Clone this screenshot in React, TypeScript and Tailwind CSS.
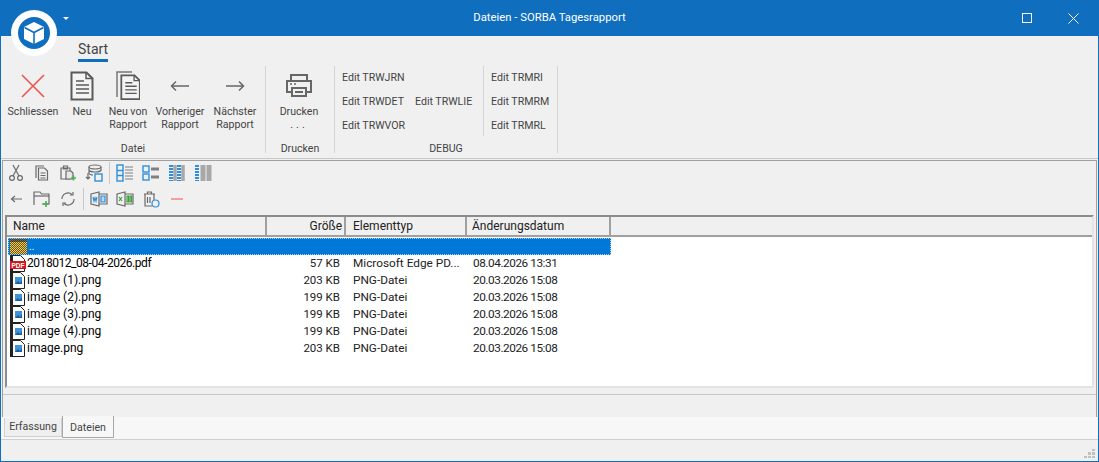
import { type ReactNode } from "react";

const rows = [
  { name: "2018012_08-04-2026.pdf", size: "57 KB", type: "Microsoft Edge PD...", date: "08.04.2026 13:31", pdf: true },
  { name: "image (1).png", size: "203 KB", type: "PNG-Datei", date: "20.03.2026 15:08" },
  { name: "image (2).png", size: "199 KB", type: "PNG-Datei", date: "20.03.2026 15:08" },
  { name: "image (3).png", size: "199 KB", type: "PNG-Datei", date: "20.03.2026 15:08" },
  { name: "image (4).png", size: "199 KB", type: "PNG-Datei", date: "20.03.2026 15:08" },
  { name: "image.png", size: "203 KB", type: "PNG-Datei", date: "20.03.2026 15:08" },
];

function Ico({ w = 20, h = 20, children }: { w?: number; h?: number; children: ReactNode }) {
  return (
    <svg width={w} height={h} viewBox={`0 0 ${w} ${h}`} fill="none" stroke="#6a6a6a" strokeWidth="1.2">
      {children}
    </svg>
  );
}

function DocLines() {
  return (
    <>
      <path d="M1.500 1.500h15l6 6v21h-21z" fill="#f4f4f4" stroke="#5a5a5a" strokeWidth="2" />
      <path d="M16 1.500v6h6" stroke="#5a5a5a" strokeWidth="1.500" />
      <path d="M6 10h8M6 14h13M6 18h13M6 22h13" stroke="#5a5a5a" strokeWidth="1.600" />
    </>
  );
}

function RibbonButton({ w, label, children }: { w: string; label: ReactNode; children: ReactNode }) {
  return (
    <div className={`${w} flex flex-col items-center text-center leading-[13px] text-[#444] whitespace-nowrap`}>
      <div className="h-[30px] flex items-center justify-center">{children}</div>
      <div className="mt-[4px]">{label}</div>
    </div>
  );
}

function Group({ w, label, children }: { w: string; label: string; children: ReactNode }) {
  return (
    <div className={`${w} flex flex-col border-r border-[#d4d4d4] h-[87px]`}>
      <div className="flex-1 flex">{children}</div>
      <div className="h-[13px] text-center leading-[17px] text-[#444]">{label}</div>
    </div>
  );
}

function Sep() {
  return <div className="w-px h-[22px] bg-[#c8c8c8] mx-[2px]" />;
}

function ToolIcon({ children }: { children: ReactNode }) {
  return <div className="w-[26px] h-[22px] flex items-center justify-center">{children}</div>;
}

function FileIcon({ pdf }: { pdf?: boolean }) {
  return (
    <svg width="16" height="17" viewBox="0 0 16 17" className="shrink-0">
      <path d="M1.500.5h9l4 4v12h-13z" fill="#fff" stroke="#222" strokeWidth="1" />
      <path d="M0 0h3v17H0z" fill="#222" />
      {pdf ? (
        <>
          <rect x="0" y="6" width="16" height="8" fill="#d8141c" />
          <text x="8" y="12.500" textAnchor="middle" fontSize="6.500" fontWeight="700" fill="#fff" fontFamily="Liberation Sans, sans-serif">
            PDF
          </text>
        </>
      ) : (
        <>
          <rect x="5" y="5" width="7" height="7" fill="#3f93d6" />
          <path d="M5 12l3-3 2 2 2-3v4z" fill="#1b5e9e" />
        </>
      )}
    </svg>
  );
}

export default function App() {
  return (
    <div className="relative w-[1099px] h-[462px] flex flex-col bg-[#f0f0f0] border-x border-b border-[#106ebe] overflow-hidden text-[10.6px] font-['Roboto',sans-serif]">
      {/* Titelleiste */}
      <div className="h-9 shrink-0 -mx-px bg-[#106ebe] flex items-center text-white text-[11.3px]">
        <div className="flex-1 text-center">Dateien - SORBA Tagesrapport</div>
        <div className="absolute right-[66px] top-[13px] w-[10px] h-[10px] border border-white" />
        <svg className="absolute right-[19px] top-[13px]" width="11" height="11" viewBox="0 0 11 11" stroke="#fff" strokeWidth="1">
          <path d="M.5.5l10 10M10.500.5l-10 10" />
        </svg>
      </div>

      {/* Logo */}
      <div className="absolute left-[10px] top-[10px] w-[46px] h-[46px] rounded-full bg-white flex items-center justify-center">
        <svg width="32" height="32" viewBox="0 0 32 32">
          <circle cx="16" cy="16" r="16" fill="#106ebe" />
          <path d="M16 5l10 5v12l-10 5-10-5V10z" fill="#fff" />
          <path d="M6.500 10.500l9.500 5 9.500-5M16 15.500V27" stroke="#106ebe" strokeWidth="1.600" fill="none" />
        </svg>
      </div>
      <div className="absolute left-[62px] top-[17px] w-0 h-0 border-x-[3px] border-x-transparent border-t-[3px] border-t-white" />

      {/* Tabs */}
      <div className="h-[27px] shrink-0 pl-[77px] pt-[5px]">
        <div className="inline-block text-[14px] leading-[17px] text-[#444] border-b-[3px] border-[#106ebe] pb-px">Start</div>
      </div>

      {/* Ribbon */}
      <div className="h-[96px] shrink-0 flex pt-[3px] border-b border-[#c8c8c8]">
        <Group w="w-[265px]" label="Datei">
          <div className="flex pt-[5px] pl-[7px]">
            <RibbonButton w="w-[50px]" label="Schliessen">
              <svg width="24" height="24" viewBox="0 0 24 24" stroke="#ef5350" strokeWidth="1.600">
                <path d="M1 1l22 22M23 1L1 23" />
              </svg>
            </RibbonButton>
            <RibbonButton w="w-[48px]" label="Neu">
              <svg width="24" height="30" viewBox="0 0 24 30" fill="none">
                <DocLines />
              </svg>
            </RibbonButton>
            <RibbonButton w="w-[44px]" label={<>Neu von<br />Rapport</>}>
              <svg width="24" height="30" viewBox="0 0 24 30" fill="none">
                <path d="M1 26V1h15" stroke="#777" strokeWidth="1.500" />
                <g transform="translate(4 3) scale(.88)">
                  <DocLines />
                </g>
              </svg>
            </RibbonButton>
            <RibbonButton w="w-[60px]" label={<>Vorheriger<br />Rapport</>}>
              <svg width="20" height="12" viewBox="0 0 20 12" fill="none" stroke="#666" strokeWidth="1.500">
                <path d="M19 6H2M6 1.500L1.500 6 6 10.500" />
              </svg>
            </RibbonButton>
            <RibbonButton w="w-[50px]" label={<>Nächster<br />Rapport</>}>
              <svg width="20" height="12" viewBox="0 0 20 12" fill="none" stroke="#666" strokeWidth="1.500">
                <path d="M1 6h17M14 1.500L18.500 6 14 10.500" />
              </svg>
            </RibbonButton>
          </div>
        </Group>
        <Group w="w-[69px]" label="Drucken">
          <div className="pt-[5px] pl-[4px]">
            <RibbonButton w="w-[58px]" label={<>Drucken<br /><span className="tracking-[3px]">...</span></>}>
              <svg width="28" height="26" viewBox="0 0 28 26" fill="none" stroke="#666" strokeWidth="2">
                <path d="M6 8V2h16v6M6 19H2V8h24v11h-4" />
                <path d="M7 15h14v8H7zM10 19h8" />
                <path d="M5 11h2M9 11h2" strokeWidth="1.500" />
              </svg>
            </RibbonButton>
          </div>
        </Group>
        <Group w="w-[223px]" label="DEBUG">
          <div className="flex text-[#444]">
            <div className="w-[80px] pl-[7px] flex flex-col gap-[11px] pt-[5px] leading-[13px]">
              <div>Edit TRWJRN</div>
              <div>Edit TRWDET</div>
              <div>Edit TRWVOR</div>
            </div>
            <div className="w-[68px] pt-[29px] leading-[13px]">Edit TRWLIE</div>
            <div className="w-[74px] h-[70px] border-l border-[#d4d4d4] pl-[7px] flex flex-col gap-[11px] pt-[5px] leading-[13px]">
              <div>Edit TRMRI</div>
              <div>Edit TRMRM</div>
              <div>Edit TRMRL</div>
            </div>
          </div>
        </Group>
      </div>

      {/* Hauptbereich */}
      <div className="h-[258px] shrink-0 mx-px mt-px border border-[#a0a0a0] flex flex-col">
        <div className="h-[52px] shrink-0">
          <div className="h-[24px] flex items-center">
            <ToolIcon>
              <Ico w={14} h={18}>
                <path d="M4 1l6 11M10 1L4 12" />
                <circle cx="3" cy="14" r="2.400" />
                <circle cx="11" cy="14" r="2.400" />
              </Ico>
            </ToolIcon>
            <ToolIcon>
              <Ico w={14} h={16}>
                <path d="M1 13V1h8" />
                <path d="M3.500 3h6l3 3v9h-9zM5.500 8h5M5.500 10.500h5M5.500 13h5" />
              </Ico>
            </ToolIcon>
            <ToolIcon>
              <Ico w={16} h={16}>
                <path d="M1 3h9v11H1zM3.500 1h4v3h-4z" />
                <path d="M6 6h5l2 2v6H6z" fill="#e8e8e8" />
                <path d="M11 13h5M13.500 10.500v5" stroke="#4caf50" strokeWidth="1.600" />
              </Ico>
            </ToolIcon>
            <ToolIcon>
              <Ico w={18} h={18}>
                <ellipse cx="10" cy="3" rx="6" ry="2" />
                <path d="M4 3v6c0 1 2 2 4 2M16 3v4M4 6c0 1 3 2 6 2s6-1 6-2" />
                <path d="M3 9v6M1 13l2 2 2-2" />
                <rect x="10" y="10" width="7" height="7" stroke="#2f8fd8" strokeWidth="1.400" />
              </Ico>
            </ToolIcon>
            <Sep />
            <ToolIcon>
              <Ico w={18} h={18}>
                <rect x="1" y="1" width="6" height="16" stroke="#2f8fd8" strokeWidth="1.400" />
                <path d="M1 6.500h6M1 11.500h6" stroke="#2f8fd8" strokeWidth="1.400" />
                <path d="M9 3h8M9 6h8M9 9h8M9 12h8M9 15h8" stroke="#808080" />
              </Ico>
            </ToolIcon>
            <ToolIcon>
              <Ico w={18} h={18}>
                <rect x="1" y="2" width="6" height="6" stroke="#2f8fd8" strokeWidth="1.400" />
                <rect x="1" y="10" width="6" height="6" stroke="#2f8fd8" strokeWidth="1.400" />
                <path d="M9 5h8M9 13h8" stroke="#808080" strokeWidth="3" />
              </Ico>
            </ToolIcon>
            <ToolIcon>
              <Ico w={18} h={16}>
                <path d="M3 0v16M11 0v16" stroke="#2f8fd8" strokeWidth="4" strokeDasharray="2 1" />
                <path d="M7 0v16M15 0v16" stroke="#a8a8a8" strokeWidth="3.500" />
              </Ico>
            </ToolIcon>
            <ToolIcon>
              <Ico w={18} h={16}>
                <path d="M3 0v16" stroke="#2f8fd8" strokeWidth="4" strokeDasharray="2 1" />
                <path d="M9 0v16M15 0v16" stroke="#a8a8a8" strokeWidth="5" />
              </Ico>
            </ToolIcon>
          </div>
          <div className="h-[24px] mt-[2px] flex items-center">
            <ToolIcon>
              <Ico w={12} h={8}>
                <path d="M12 4H2M5 1L1.500 4 5 7" />
              </Ico>
            </ToolIcon>
            <ToolIcon>
              <Ico w={18} h={16}>
                <path d="M1 14V1h6l1.500 2H16v10H9" />
                <path d="M1 5h15" />
                <path d="M10 13h6M13 10v6" stroke="#4caf50" strokeWidth="1.600" />
              </Ico>
            </ToolIcon>
            <ToolIcon>
              <Ico w={16} h={16}>
                <path d="M2 8a6 6 0 0110-4.500M14 8a6 6 0 01-10 4.500" />
                <path d="M13 1v3h-3M3 15v-3h3" />
              </Ico>
            </ToolIcon>
            <Sep />
            <ToolIcon>
              <Ico w={18} h={16}>
                <path d="M1 3l8-2v14l-8-2zM9 3h8v10H9" />
                <path d="M3 6l1 4 1-3 1 3 1-4" stroke="#2f8fd8" />
                <path d="M11 5h4v6h-4z" fill="#b8d8f0" stroke="#2f8fd8" />
              </Ico>
            </ToolIcon>
            <ToolIcon>
              <Ico w={18} h={16}>
                <path d="M1 3l8-2v14l-8-2zM9 3h8v10H9" />
                <path d="M3 6l3 4M6 6l-3 4" stroke="#3aa03a" />
                <path d="M11 5h1.500v6H11zM14 5h1.500v6H14z" stroke="#3aa03a" />
              </Ico>
            </ToolIcon>
            <ToolIcon>
              <Ico w={17} h={17}>
                <path d="M1 3h11M4.500 3V1h4v2M2 3v12h7" />
                <path d="M4.500 6v6M7 6v6M11 3v6" />
                <circle cx="12.500" cy="12.500" r="3.500" stroke="#2f8fd8" />
              </Ico>
            </ToolIcon>
            <ToolIcon>
              <div className="w-[12px] h-[2px] bg-[#f0a0a0]" />
            </ToolIcon>
          </div>
        </div>

        {/* Dateiliste */}
        <div className="h-[173px] shrink-0 mx-[2px] mt-[2px] border-2 border-[#e4e4e4] border-l-[#8c8c8c] border-t-[#8c8c8c] bg-white flex flex-col">
          <div className="h-[20px] shrink-0 flex bg-[#f0f0f0] border-b-2 border-[#a0a0a0] leading-[19px] text-[#222] text-[12px]">
            <div className="w-[260px] pl-[6px] border-r-2 border-[#a0a0a0]">Name</div>
            <div className="w-[79px] pr-[2px] text-right border-r-2 border-[#a0a0a0]">Größe</div>
            <div className="w-[121px] pl-[7px] border-r-2 border-[#a0a0a0]">Elementtyp</div>
            <div className="w-[144px] pl-[5px] border-r-2 border-[#a0a0a0]">Änderungsdatum</div>
          </div>
          <div className="h-[17px] w-[603px] ml-px mt-px bg-[#0078d7] flex items-end pl-[1px] border border-dotted border-[#a8c8e8]">
            <svg width="17" height="15" viewBox="0 0 17 15" className="shrink-0">
              <defs>
                <pattern id="chk" width="2" height="2" patternUnits="userSpaceOnUse">
                  <rect width="2" height="2" fill="#f0c850" />
                  <rect width="1" height="1" fill="#6b5a20" />
                  <rect x="1" y="1" width="1" height="1" fill="#6b5a20" />
                </pattern>
              </defs>
              <rect width="17" height="15" fill="url(#chk)" />
              <rect width="17" height="3" fill="#2a2a2a" opacity=".6" />
            </svg>
            <div className="pl-[2px] text-white leading-[14px]">..</div>
          </div>
          {rows.map((r) => (
            <div key={r.name} className="h-[17px] flex items-center text-black leading-[17px] text-[11.5px]">
              <div className="w-[260px] flex items-center gap-px pl-[3px]">
                <FileIcon pdf={r.pdf} />
                <span className={r.pdf ? "text-[12px] tracking-[-0.45px]" : "text-[12px]"}>{r.name}</span>
              </div>
              <div className="w-[79px] pr-[6px] text-right text-[#222]">{r.size}</div>
              <div className="w-[121px] pl-[7px] text-[#222] text-[11.8px]">{r.type}</div>
              <div className="w-[144px] pl-[6px] text-[#222] text-[11.8px] tracking-[-0.45px]">{r.date}</div>
            </div>
          ))}
        </div>
        <div className="h-[6px] shrink-0" />
        <div className="flex-1 border-t border-[#c8c8c8]" />
      </div>

      {/* Untere Tabs */}
      <div className="h-[23px] shrink-0 flex pl-[3px] -mt-px border-b border-[#cfcfcf] bg-[#f7f7f7]">
        <div className="h-[19px] mt-px w-[58px] text-center leading-[17px] text-[#444] bg-[#efefef] border border-[#cfcfcf] border-t-0">Erfassung</div>
        <div className="h-[22px] -mt-px w-[52px] text-center leading-[19px] pt-[2px] text-[#444] bg-[#f7f7f7] border-x border-b border-[#a8a8a8]">Dateien</div>
      </div>

      {/* Statusleiste */}
      <div className="flex-1 flex items-end justify-end pr-[3px] pb-[3px]">
        <div className="grid grid-cols-3 gap-px w-[11px]">
          {[0, 0, 1, 0, 1, 1, 1, 1, 1].map((v, i) => (
            <div key={i} className={v ? "w-[2.5px] h-[2.5px] bg-[#c0c0c0]" : "w-[2.5px] h-[2.5px]"} />
          ))}
        </div>
      </div>
    </div>
  );
}
